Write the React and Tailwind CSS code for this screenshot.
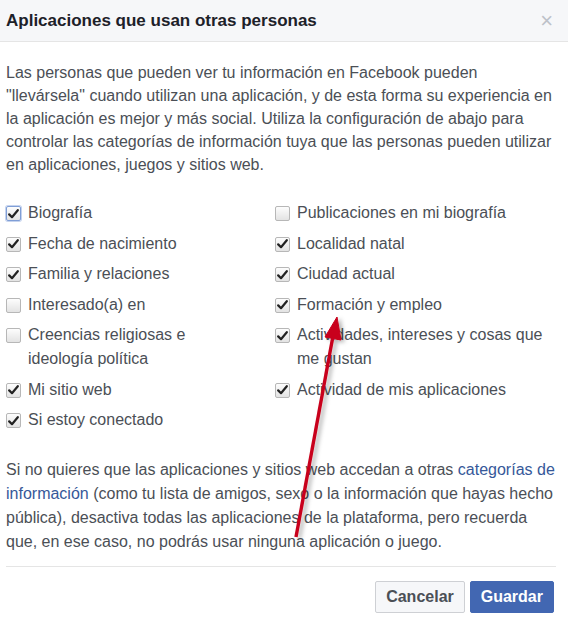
import React from 'react';

const left = [
  { label: 'Biografía', checked: true, focus: true },
  { label: 'Fecha de nacimiento', checked: true },
  { label: 'Familia y relaciones', checked: true },
  { label: 'Interesado(a) en', checked: false },
  { label: 'Creencias religiosas e ideología política', checked: false },
  { label: 'Mi sitio web', checked: true },
  { label: 'Si estoy conectado', checked: true },
];

const right = [
  { label: 'Publicaciones en mi biografía', checked: false },
  { label: 'Localidad natal', checked: true },
  { label: 'Ciudad actual', checked: true },
  { label: 'Formación y empleo', checked: true },
  { label: 'Actividades, intereses y cosas que me gustan', checked: true },
  { label: 'Actividad de mis aplicaciones', checked: true },
];

const Box = ({ checked, focus }) => (
  <span
    className={`mt-[5px] flex h-[15px] w-[15px] shrink-0 items-center justify-center rounded-[2px] border bg-gradient-to-b from-[#fdfdfd] to-[#e3e3e3] ${
      focus ? 'border-[#7f9ed6] shadow-[0_0_0_1px_#c5d3ee]' : 'border-[#b7b7b7]'
    }`}
  >
    {checked && (
      <svg width="11" height="10" viewBox="0 0 11 10">
        <path d="M1.2 5.4 L4 8.2 L9.8 1.2" fill="none" stroke="#222" strokeWidth="2.2" strokeLinecap="round" strokeLinejoin="round" />
      </svg>
    )}
  </span>
);

const Item = ({ label, checked, focus }) => (
  <label className="flex gap-[7px] leading-[24px]">
    <Box checked={checked} focus={focus} />
    <span className="pr-2">{label}</span>
  </label>
);

export default function App() {
  return (
    <div
      className="relative h-[619px] w-[568px] overflow-hidden bg-white text-[16px] text-[#4b4f56]"
      style={{ fontFamily: '"Liberation Sans", Arial, sans-serif' }}
    >
      <div className="flex h-[42px] items-center justify-between border-b border-[#e5e5e5] bg-[#f6f7f9] pl-[6px] pr-[15px]">
        <h1 className="text-[17px] font-bold text-[#1d2129]">Aplicaciones que usan otras personas</h1>
        <span className="text-[22px] leading-none text-[#bec2c9]">×</span>
      </div>

      <div className="pl-[6px] pr-[12px] pt-[19px]">
        <p className="leading-[23px]">
          Las personas que pueden ver tu información en Facebook pueden "llevársela" cuando utilizan una aplicación, y
          de esta forma su experiencia en la aplicación es mejor y más social. Utiliza la configuración de abajo para
          controlar las categorías de información tuya que las personas pueden utilizar en aplicaciones, juegos y sitios
          web.
        </p>

        <div className="mt-[25px] grid grid-cols-[269px_1fr]">
          <div className="flex flex-col gap-[6.5px] pr-[45px]">
            {left.map((it) => (
              <Item key={it.label} {...it} />
            ))}
          </div>
          <div className="flex flex-col gap-[6.5px]">
            {right.map((it) => (
              <Item key={it.label} {...it} />
            ))}
          </div>
        </div>

        <p className="mt-[26px] leading-[24px]">
          Si no quieres que las aplicaciones y sitios web accedan a otras{' '}
          <span className="text-[#365899]">categorías de información</span> (como tu lista de amigos, sexo o la
          información que hayas hecho pública), desactiva todas las aplicaciones de la plataforma, pero recuerda que, en
          ese caso, no podrás usar ninguna aplicación o juego.
        </p>

        <div className="mt-[12px] border-t border-[#e5e5e5]" />

        <div className="flex justify-end gap-[5px] pr-[2px] pt-[14px]">
          <button className="h-[32px] rounded-[2px] border border-[#ced0d4] bg-[#f6f7f9] px-[10px] text-[16px] font-bold text-[#4b4f56]">
            Cancelar
          </button>
          <button className="h-[32px] rounded-[2px] border border-[#4267b2] bg-[#4267b2] px-[10px] text-[16px] font-bold text-white">
            Guardar
          </button>
        </div>
      </div>

      <svg className="pointer-events-none absolute left-0 top-0" width="568" height="619">
        <defs>
          <filter id="sh" x="-50%" y="-10%" width="200%" height="120%">
            <feDropShadow dx="3" dy="2" stdDeviation="2" floodColor="#000" floodOpacity="0.3" />
          </filter>
        </defs>
        <g filter="url(#sh)" fill="#c8001b" stroke="#c8001b">
          <line x1="296" y1="537" x2="333" y2="336" strokeWidth="3.4" />
          <polygon points="337,317 341,340 325,337" strokeWidth="1" />
        </g>
      </svg>
    </div>
  );
}
